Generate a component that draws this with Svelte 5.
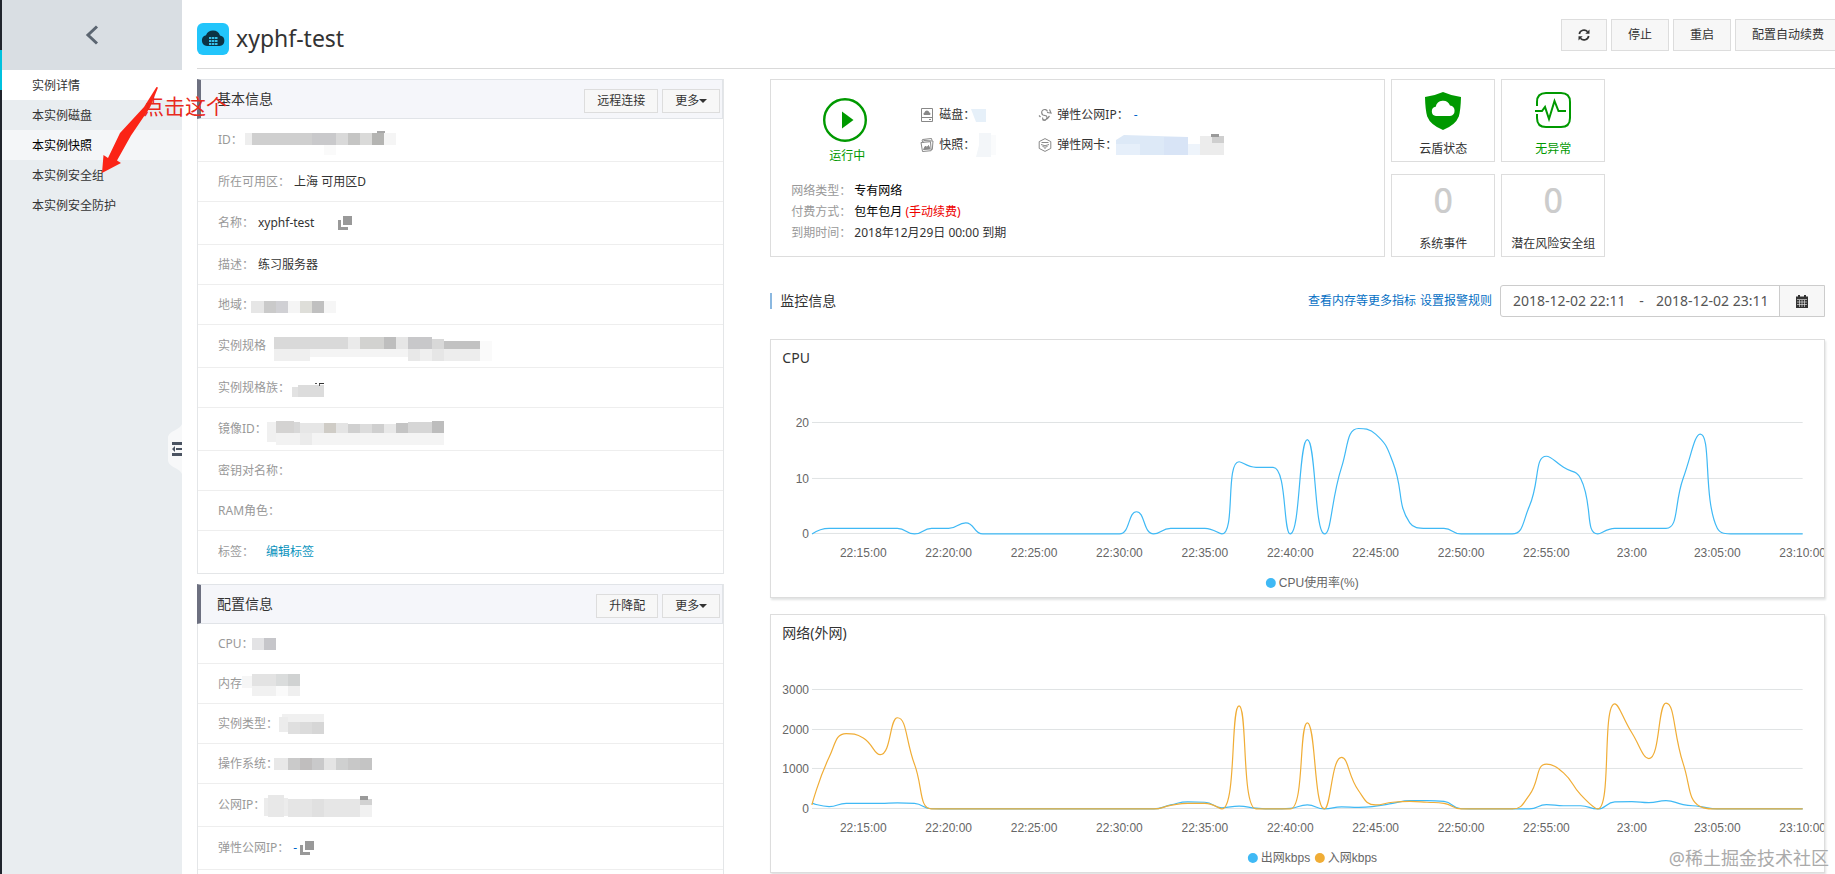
<script lang="ts">
	type Block = [number, number, number, number, string];
	type Row = { label: string; value?: string; copy?: boolean; link?: string; tall?: boolean; mask?: Block[] };
	type Series = { name: string; color: string; values: number[] };

	const menu = [
		{ text: '实例详情', state: 'active' },
		{ text: '本实例磁盘', state: '' },
		{ text: '本实例快照', state: 'hover' },
		{ text: '本实例安全组', state: '' },
		{ text: '本实例安全防护', state: '' }
	];

	// mask blocks are x, y, width, height, colour inside the row
	const basic: Row[] = [
		{
			label: 'ID：',
			tall: true,
			mask: [
				[47, 14, 8, 12, '#eeeeee'], [54, 14, 60, 12, '#cfcfcf'], [114, 14, 24, 12, '#c9c9cb'],
				[138, 14, 12, 12, '#d9d9d9'], [150, 14, 12, 12, '#c5c5c4'], [162, 14, 12, 12, '#dadad9'],
				[174, 14, 12, 12, '#b4b4b2'], [186, 14, 12, 12, '#f5f5f5'], [179, 12, 8, 2, '#a8a8a8'],
				[126, 26, 12, 10, '#fafafa']
			]
		},
		{ label: '所在可用区：', value: '上海 可用区D' },
		{ label: '名称：', value: 'xyphf-test', copy: true, tall: true },
		{ label: '描述：', value: '练习服务器' },
		{
			label: '地域：',
			mask: [
				[53, 16, 13, 12, '#e6e6e6'], [66, 16, 12, 12, '#cacaca'], [78, 16, 12, 12, '#d0d0d4'],
				[90, 16, 12, 12, '#f5f5f5'], [102, 16, 12, 12, '#deded9'], [114, 16, 12, 12, '#c0c0c0'],
				[126, 16, 12, 12, '#f6f6f6']
			]
		},
		{
			label: '实例规格',
			tall: true,
			mask: [
				[76, 12, 74, 12, '#d9d9d9'], [150, 12, 12, 12, '#eaeaea'], [162, 12, 24, 12, '#d2d2d0'],
				[186, 12, 12, 12, '#bebebe'], [198, 12, 12, 12, '#e6e6e6'], [210, 12, 24, 12, '#c8c8ca'],
				[234, 14, 12, 10, '#d8d8d8'], [246, 16, 36, 8, '#c2c2c2'], [282, 16, 12, 20, '#fafafa'],
				[76, 24, 36, 12, '#efefef'], [112, 24, 98, 8, '#f4f4f4'], [210, 24, 12, 12, '#e8e8e8'],
				[222, 24, 12, 12, '#efefef'], [234, 24, 12, 12, '#e6e6e6'], [246, 24, 36, 12, '#ededed']
			]
		},
		{
			label: '实例规格族：',
			mask: [
				[94, 19, 6, 10, '#e2e2e2'], [100, 17, 26, 12, '#dcdcdc'], [117, 15, 2, 1, '#555555'],
				[121, 15, 5, 1, '#333333'], [121, 16, 1, 2, '#555555']
			]
		},
		{
			label: '镜像ID：',
			tall: true,
			mask: [
				[69, 14, 9, 20, '#f0f0f0'], [78, 13, 18, 12, '#d4d3d2'], [96, 14, 6, 11, '#d8d8d8'],
				[102, 15, 24, 10, '#e6e6e6'], [126, 15, 12, 10, '#cfccc6'], [138, 15, 12, 10, '#e4e4e4'],
				[150, 16, 12, 9, '#d0d0d0'], [162, 16, 12, 9, '#dcdcdc'], [174, 16, 12, 9, '#cfcfcf'],
				[186, 16, 12, 9, '#e8e8e8'], [198, 15, 12, 10, '#c4c4c4'], [210, 14, 24, 11, '#d6d6d6'],
				[234, 13, 12, 12, '#bdbdbd'], [78, 25, 24, 12, '#f2f2f2'], [102, 25, 12, 12, '#ebebeb'],
				[114, 25, 132, 12, '#f4f4f4']
			]
		},
		{ label: '密钥对名称：' },
		{ label: 'RAM角色：' },
		{ label: '标签：', link: '编辑标签', tall: true }
	];

	const config: Row[] = [
		{ label: 'CPU：', mask: [[54, 14, 12, 12, '#e3e3e5'], [66, 14, 12, 12, '#c6c6ca']] },
		{
			label: '内存',
			mask: [
				[44, 12, 10, 12, '#f6f6f6'], [54, 10, 24, 12, '#e3e3e3'], [78, 10, 12, 12, '#dadcdc'],
				[90, 10, 12, 12, '#d0d2d2'], [54, 22, 24, 10, '#f1f1f1'], [78, 22, 12, 10, '#fafafa'],
				[90, 22, 12, 10, '#efefef']
			]
		},
		{
			label: '实例类型：',
			mask: [
				[84, 10, 42, 8, '#f0f0f0'], [81, 13, 9, 15, '#ececec'], [90, 18, 12, 12, '#dfdfdf'],
				[102, 18, 12, 12, '#dbdbdb'], [114, 18, 12, 12, '#d6d6d6']
			]
		},
		{
			label: '操作系统：',
			mask: [
				[76, 14, 14, 12, '#e8e8e8'], [90, 14, 12, 12, '#cacaca'], [102, 14, 12, 12, '#c0bebe'],
				[114, 14, 12, 12, '#c9c9ca'], [126, 14, 12, 12, '#e4e4e4'], [138, 14, 12, 12, '#cfd0d0'],
				[150, 14, 12, 12, '#c8c8c8'], [162, 14, 12, 12, '#c4c4c4']
			]
		},
		{
			label: '公网IP：',
			tall: true,
			mask: [
				[66, 14, 24, 18, '#ececec'], [70, 11, 16, 22, '#e8e8e8'], [90, 15, 24, 18, '#e5e5e5'],
				[114, 15, 12, 18, '#e0e0e0'], [126, 15, 36, 18, '#e6e6e6'], [162, 15, 12, 6, '#d2d2d2'],
				[162, 12, 8, 4, '#9a9a9a'], [162, 21, 12, 12, '#f1f1f1']
			]
		},
		{ label: '弹性公网IP：', value: '-', copy: true, tall: true },
		{ label: '' }
	];

	const ticks = ['22:15:00', '22:20:00', '22:25:00', '22:30:00', '22:35:00', '22:40:00', '22:45:00', '22:50:00', '22:55:00', '23:00', '23:05:00', '23:10:00'];

	const cpu: Series[] = [
		{
			name: 'CPU使用率(%)',
			color: '#3fb9f5',
			values: [0, 1, 1, 1, 1, 1, 0, 1, 1, 2, 0, 0, 0, 0, 0, 0, 0, 0, 0, 4, 0, 1, 1, 1, 0, 13, 12, 12, 0, 17, 0, 12, 19, 18, 13, 2, 1, 1, 0, 0, 0, 0, 5, 14, 12, 10, 0, 1, 1, 1, 1, 10, 18, 1, 0, 0, 0, 0, 0]
		}
	];

	const network: Series[] = [
		{
			name: '出网kbps',
			color: '#3fb9f5',
			values: [150, 60, 140, 140, 140, 155, 140, 5, 0, 0, 0, 0, 0, 0, 0, 0, 0, 0, 0, 0, 0, 100, 180, 170, 30, 70, 20, 0, 15, 100, 0, 50, 40, 70, 140, 210, 210, 190, 5, 0, 0, 0, 0, 110, 80, 80, 0, 180, 185, 160, 210, 110, 60, 0, 0, 0, 0, 0, 0]
		},
		{
			name: '入网kbps',
			color: '#f0ad36',
			values: [100, 1300, 1900, 1790, 1370, 2300, 1130, 0, 0, 0, 0, 0, 0, 0, 0, 0, 0, 0, 0, 0, 0, 90, 140, 140, 0, 2600, 0, 0, 0, 2170, 0, 1300, 460, 100, 170, 190, 170, 140, 0, 0, 0, 0, 350, 1130, 910, 360, 0, 2650, 1920, 1270, 2670, 1150, 60, 0, 0, 0, 0, 0, 0]
		}
	];

	const left = 41;
	const right = 1032;
	const bottom = 167;

	function clamp(v: number, a: number, b: number) {
		return Math.max(Math.min(v, Math.max(a, b)), Math.min(a, b));
	}

	// smooth curve whose control points never pass the neighbouring values
	function curve(values: number[], max: number, top: number) {
		const pts = values.map((v, i) => [
			left + ((right - left) * i) / (values.length - 1),
			bottom - ((bottom - top) * v) / max
		]);
		let d = `M${pts[0][0]} ${pts[0][1]}`;
		let out = pts[0];
		for (let i = 1; i < pts.length; i++) {
			const prev = pts[i - 1];
			const p = pts[i];
			const next = pts[i + 1];
			let into = p;
			let nextOut = p;
			if (next) {
				const a = Math.hypot(p[0] - prev[0], p[1] - prev[1]);
				const b = Math.hypot(next[0] - p[0], next[1] - p[1]);
				const ratio = b / (a + b);
				nextOut = p.map((c, k) => clamp(c + (next[k] - prev[k]) * 0.5 * ratio, c, next[k]));
				into = p.map((c, k) => clamp(c - ((nextOut[k] - c) * a) / b, prev[k], c));
				nextOut = p.map((c, k) => c + ((c - into[k]) * b) / a);
			}
			d += `C${[...out, ...into, ...p].map((n) => n.toFixed(1)).join(' ')}`;
			out = nextOut;
		}
		return d;
	}

	let from = $state('2018-12-02 22:11');
	let to = $state('2018-12-02 23:11');
</script>

<svelte:head>
	<title>xyphf-test</title>
</svelte:head>

{#snippet copyIcon()}
	<svg width="14" height="14" viewBox="0 0 14 14" aria-hidden="true">
		<path d="M5 0h9v9H5zM0 4h3v7h7v3H0z" fill="#999" />
	</svg>
{/snippet}

{#snippet panel(title: string, action: string, rows: Row[])}
	<section class="panel">
		<header class="panel-head">
			<h2>{title}</h2>
			<button type="button" class="btn-small">{action}</button>
			<button type="button" class="btn-small more">更多<span class="caret"></span></button>
		</header>
		{#each rows as row}
			<div class="row" class:tall={row.tall}>
				<span class="label">{row.label}</span>
				{#if row.value}
					<span class="value" class:dash={row.value === '-'}>{row.value}</span>
				{/if}
				{#if row.link}
					<a href="#tags" class="tag-link">{row.link}</a>
				{/if}
				{#if row.copy}
					<button type="button" class="copy" class:near={row.value === '-'} aria-label="copy">{@render copyIcon()}</button>
				{/if}
				{#if row.mask}
					<svg class="mask" width="300" height="40" aria-hidden="true">
						{#each row.mask as [x, y, w, h, fill]}
							<rect {x} {y} width={w} height={h} {fill} />
						{/each}
					</svg>
				{/if}
			</div>
		{/each}
	</section>
{/snippet}

{#snippet chart(title: string, series: Series[], max: number, steps: number, top: number, legend: number[])}
	<section class="chart">
		<h3>{title}</h3>
		<svg viewBox="0 0 1053 230" role="img" aria-label={title}>
			{#each Array(steps + 1) as _, i}
				{@const y = Math.round(bottom - ((bottom - top) * i) / steps)}
				<line x1={left} x2={right} y1={y - 0.5} y2={y - 0.5} stroke="#e0e3e4" />
				<text x={left - 3} y={y + 4} text-anchor="end">{(max / steps) * i}</text>
			{/each}
			{#each ticks as tick, i}
				<text x={left + ((right - left) * (3 + 5 * i)) / 58} y="190" text-anchor="middle">{tick}</text>
			{/each}
			{#each series as s, i}
				<path d={curve(s.values, max, top)} fill="none" stroke={s.color} stroke-width="1.2" />
				<circle cx={legend[i]} cy="216" r="5" fill={s.color} />
				<text x={legend[i] + 8} y="220">{s.name}</text>
			{/each}
		</svg>
	</section>
{/snippet}

<div class="page">
	<div class="strip"><span></span></div>
	<aside class="sidebar">
		<button type="button" class="back" aria-label="back">
			<svg width="14" height="20" viewBox="0 0 14 20"><path d="M12 1.500L3 10l9 8.500" fill="none" stroke="#5b6571" stroke-width="3" /></svg>
		</button>
		<nav>
			{#each menu as item}
				<a href="#menu" class={item.state}>{item.text}</a>
			{/each}
		</nav>
		<button type="button" class="handle" aria-label="collapse">
			<svg width="14" height="50" viewBox="0 0 14 50">
				<path d="M14 0C12 6 0 7 0 14v22c0 7 12 8 14 14z" fill="#f7f8f9" />
				<path d="M4 18h10v3H4zM8 24h6v2H8zM4 29h10v3H4zM7 22v6l-3-3z" fill="#4a5361" />
			</svg>
		</button>
	</aside>

	<main>
		<header class="top">
			<svg width="32" height="32" viewBox="0 0 32 32" aria-hidden="true">
				<rect width="32" height="32" rx="6" fill="#22c5fb" />
				<path d="M10 23a5.500 5.500 0 0 1-1-10.800A7.500 7.500 0 0 1 23 12.500 5.300 5.300 0 0 1 22.500 23z" fill="#0c3344" />
				<path d="M12 14h8.500v2H12zM12 17h8.500v2H12zM12 20h8.500v2H12z" fill="#35bfe8" />
				<path d="M14.500 14v8M17.500 14v8" stroke="#0c3344" stroke-width=".6" />
			</svg>
			<h1>xyphf-test</h1>
			<div class="tools">
				<button type="button" class="btn refresh" aria-label="refresh">
					<svg width="12" height="12" viewBox="0 0 12 12">
						<path d="M1.300 5A4.800 4.800 0 0 1 9.600 2.700M10.700 7a4.800 4.800 0 0 1-8.300 2.300" fill="none" stroke="#333" stroke-width="1.700" />
						<path d="M11.500 .5v4.200H7.300zM.5 11.500V7.300h4.200z" fill="#333" />
					</svg>
				</button>
				<button type="button" class="btn">停止</button>
				<button type="button" class="btn">重启</button>
				<button type="button" class="btn">配置自动续费</button>
			</div>
		</header>

		<div class="columns">
			<div class="left">
				{@render panel('基本信息', '远程连接', basic)}
				{@render panel('配置信息', '升降配', config)}
			</div>

			<div class="right">
				<div class="overview">
					<section class="status">
						<div class="status-top">
							<div class="running">
								<svg width="44" height="44" viewBox="0 0 44 44" aria-hidden="true">
									<circle cx="22" cy="22" r="20.800" fill="none" stroke="#090" stroke-width="2.400" />
									<path d="M19 13.500v17L30.500 22z" fill="#090" />
								</svg>
								<span>运行中</span>
							</div>
							<div class="resources">
								<div class="res">
									<svg width="14" height="14" viewBox="0 0 14 14" fill="none" stroke="#888">
										<path d="M1.500 .5h11v13h-11zM1.500 9.500h11M9 11.500h2" />
										<path d="M4 7a1.500 1.500 0 0 1 .5-2.600 2.500 2.500 0 0 1 4.800 0A1.500 1.500 0 0 1 10 7z" fill="#888" stroke="none" />
									</svg>
									<span>磁盘：</span>
									<svg class="mask-disk" width="16" height="13"><path d="M0 0h15v13H5z" fill="#e6f0f9" /></svg>
								</div>
								<div class="res">
									<svg width="14" height="14" viewBox="0 0 14 14" fill="none" stroke="#888">
										<path d="M4 4.500L2 3l.5-1.500 9-1 .5 2" />
										<path d="M3.500 2.500l9.500.5-.7 8.500-1.500-.2M1 4.500l9.500-.8.7 9-8.700.8z" />
										<path d="M3.500 11.500l2-3.500 1.500 1.500 1.500-2 1.500 3.500z" fill="#888" />
									</svg>
									<span>快照：</span>
									<svg class="mask-snap" width="20" height="24"><path d="M3 0h12v24H0l3-12z" fill="#f3f6f9" /><path d="M15 2h5v20h-5z" fill="#fafbfc" /></svg>
								</div>
								<div class="res">
									<svg width="14" height="14" viewBox="0 0 14 14" fill="none" stroke="#888" stroke-width="1.200">
										<path d="M9.500 3.500A3 3 0 1 0 5 7l3.500 1A2.500 2.500 0 0 1 5 11.500" />
										<path d="M4.500 9.500L5 12l2.500.3M9 4.500L13 5l-1.500-3.500M9 11l2.500-3M1 7.500l1.500 1.500" />
									</svg>
									<span>弹性公网IP：</span>
									<b>-</b>
								</div>
								<div class="res">
									<svg width="14" height="14" viewBox="0 0 14 14" fill="none" stroke="#888">
										<path d="M7 .6l5.800 3v6.800L7 13.400 1.200 10.400V3.600z" />
										<path d="M3.500 4.500h7M3 6.500q4 2.500 8 0M4.500 8.500q2.500 1.500 5 0M6.500 10.500h1" />
									</svg>
									<span>弹性网卡：</span>
									<svg class="mask-eni" width="108" height="22">
										<path d="M0 21V6l8-5 64 2v18z" fill="#dde9f7" />
										<rect x="0" y="10" width="24" height="11" fill="#e6effa" />
										<rect x="48" y="3" width="24" height="18" fill="#d8e4f6" />
										<rect x="72" y="10" width="12" height="11" fill="#eef4fb" />
										<rect x="84" y="2" width="24" height="19" fill="#ececec" />
										<rect x="96" y="2" width="12" height="7" fill="#cfcfcf" />
										<rect x="95" y="0" width="8" height="3" fill="#9a9a9a" />
									</svg>
								</div>
							</div>
						</div>
						<dl>
							<div><dt>网络类型：</dt><dd>专有网络</dd></div>
							<div><dt>付费方式：</dt><dd>包年包月 <em>(手动续费)</em></dd></div>
							<div><dt>到期时间：</dt><dd class="date">2018年12月29日 00:00 到期</dd></div>
						</dl>
					</section>
					<div class="tiles">
						<div class="tile">
							<svg width="36" height="38" viewBox="0 0 36 38" aria-hidden="true">
								<path d="M18 0q9 4 18 5-.3 13-2.200 19.500Q30.500 33 18 38 5.500 33 2.200 24.500.3 18 0 5q9-1 18-5z" fill="#090" />
								<path d="M11 24a4.700 4.700 0 0 1-.3-9.300 7.500 7.500 0 0 1 14.300-1.200A5.300 5.300 0 0 1 25 24z" fill="#fff" />
							</svg>
							<span>云盾状态</span>
						</div>
						<div class="tile ok">
							<svg width="36" height="36" viewBox="0 0 36 36" fill="none" stroke="#090" stroke-width="2" aria-hidden="true">
								<path d="M2 14v-4q0-9 9-9h15q9 0 9 9v16q0 9-9 9H11q-9 0-9-9v-4" />
								<path d="M0 19h7l3-4 4 12 5.500-18 4 10H31" />
							</svg>
							<span>无异常</span>
						</div>
						<div class="tile"><strong>0</strong><span>系统事件</span></div>
						<div class="tile"><strong>0</strong><span>潜在风险安全组</span></div>
					</div>
				</div>

				<div class="monitor-head">
					<h2>监控信息</h2>
					<div class="links">
						<a href="#metrics">查看内存等更多指标</a>
						<a href="#alarm">设置报警规则</a>
					</div>
					<div class="range">
						<input type="text" aria-label="from" bind:value={from} />
						<span>-</span>
						<input type="text" aria-label="to" bind:value={to} />
						<button type="button" aria-label="calendar">
							<svg width="12" height="13" viewBox="0 0 12 13">
								<path d="M0 1.500h2V0h2v1.500h4V0h2v1.500h2V13H0z" fill="#333" />
								<path d="M1 4.500h10M1 7h10M1 9.500h10M3.500 5v7M6 5v7M8.500 5v7" stroke="#f7f7f7" stroke-width=".6" />
							</svg>
						</button>
					</div>
				</div>

				{@render chart('CPU', cpu, 20, 2, 56, [500])}
				{@render chart('网络(外网)', network, 3000, 3, 48, [482, 549])}
			</div>
		</div>
	</main>

	<div class="note">
		<svg width="56" height="88" viewBox="0 0 56 88" aria-hidden="true">
			<path d="M54.500 0l1.500.5-8 20-19 28-14 25 4 2.500L0 86l1.500-18L6 71l12-25 24-26z" fill="#fb2416" />
		</svg>
		<span>点击这个</span>
	</div>
	<div class="watermark">@稀土掘金技术社区</div>
</div>

<style>
	:global(body) {
		background: #fff;
		color: #333;
		font: 12px/18px 'Noto Sans', 'Noto Sans CJK SC', sans-serif;
	}

	.page {
		position: relative;
		display: flex;
		height: 100vh;
		overflow: hidden;
	}

	h1, h2, h3, dl, dd {
		margin: 0;
		font-weight: 400;
	}

	a {
		text-decoration: none;
	}

	button, input {
		font: inherit;
		color: inherit;
	}

	svg {
		display: block;
		flex: none;
	}

	.strip {
		flex: 0 0 2px;
		padding-top: 50px;
		background: #20242c;
	}

	.strip span {
		display: block;
		height: 40px;
		background: #00c1de;
	}

	.sidebar {
		position: relative;
		flex: 0 0 180px;
		background: #e9edf0;
	}

	.back {
		display: flex;
		align-items: center;
		justify-content: center;
		width: 100%;
		height: 70px;
		padding: 0;
		border: none;
		background: #d9dee3;
	}

	nav a {
		display: block;
		padding: 2px 0 0 30px;
		line-height: 28px;
		color: #333;
	}

	nav .active {
		background: #fff;
	}

	nav .hover {
		background: #f4f6f8;
		color: #000;
	}

	.handle {
		position: absolute;
		top: 424px;
		right: 0;
		padding: 0;
		border: none;
		background: none;
	}

	main {
		flex: 1;
		min-width: 0;
		padding-left: 15px;
	}

	.top {
		display: flex;
		align-items: center;
		height: 60px;
		padding-top: 8px;
		border-bottom: 1px solid #d9d9d9;
		overflow: hidden;
	}

	.top > svg {
		margin-top: 2px;
	}

	h1 {
		margin-left: 7px;
		font-size: 23px;
		line-height: 32px;
	}

	.tools {
		display: flex;
		gap: 4px;
		margin: 0 -6px 6px auto;
	}

	.btn {
		height: 32px;
		padding: 0 16px;
		border: 1px solid #ddd;
		background: #f7f7f7;
	}

	.columns {
		display: grid;
		grid-template-columns: minmax(0, 1fr) minmax(0, 2fr);
		gap: 46px;
		padding: 10px 10px 0 0;
	}

	.panel {
		margin-bottom: 10px;
		border: 1px solid #e4e6e8;
		border-top: none;
	}

	.panel-head {
		display: flex;
		gap: 4px;
		height: 38px;
		margin-left: -1px;
		padding-right: 2px;
		border: 1px solid #e1e4e8;
		border-left: 4px solid #6d7080;
		background: #f5f6fa;
	}

	.panel-head h2 {
		flex: 1;
		padding-left: 16px;
		font-size: 14px;
		line-height: 38px;
	}

	.btn-small {
		height: 24px;
		margin-top: 9px;
		padding: 0 12px;
		border: 1px solid #ddd;
		background: #f7f7f7;
		line-height: 22px;
	}

	.more {
		display: flex;
		align-items: center;
	}

	.caret {
		border: 4px solid transparent;
		border-top-color: #333;
		border-bottom: none;
	}

	.row {
		position: relative;
		display: flex;
		align-items: center;
		gap: 4px;
		height: 39px;
		padding-left: 20px;
		border-bottom: 1px solid #eee;
	}

	.row:last-child {
		border-bottom: none;
	}

	.tall {
		height: 42px;
	}

	.label, dt {
		color: #999;
	}

	.dash, .res b {
		color: #06c;
		font-weight: 400;
	}

	.tag-link {
		margin-left: 8px;
		color: #0a93bd;
	}

	.copy {
		margin-left: 20px;
		padding: 0;
		border: none;
		background: none;
	}

	.copy.near {
		margin-left: -1px;
	}

	.mask {
		position: absolute;
		top: 0;
		left: 0;
	}

	.overview {
		display: flex;
		gap: 6px;
	}

	.status {
		flex: 0 1 613px;
		border: 1px solid #ddd;
	}

	.status-top {
		display: flex;
		height: 68px;
		padding: 18px 0 14px 50px;
	}

	.running {
		display: flex;
		flex-direction: column;
		align-items: center;
		gap: 5px;
		width: 48px;
		color: #090;
	}

	.running span {
		padding-left: 4px;
	}

	.resources {
		display: grid;
		grid-template-columns: 118px 200px;
		grid-template-rows: 30px 30px;
		grid-auto-flow: column;
		margin-left: 51px;
		padding-top: 2px;
	}

	.res {
		position: relative;
		display: flex;
		align-items: center;
		gap: 5px;
	}

	.mask-disk, .mask-snap, .mask-eni {
		position: absolute;
		left: 51px;
	}

	.mask-snap {
		left: 56px;
	}

	.mask-eni {
		left: 78px;
	}

	dl {
		padding: 0 20px;
		line-height: 21px;
	}

	dl div {
		display: flex;
		gap: 3px;
	}

	dd {
		color: #000;
	}

	.date {
		color: #333;
	}

	em {
		color: #e00;
		font-style: normal;
	}

	.tiles {
		display: grid;
		grid-template-columns: 104px 104px;
		grid-auto-rows: 83px;
		gap: 12px 6px;
	}

	.tile {
		display: flex;
		flex-direction: column;
		align-items: center;
		justify-content: space-between;
		padding: 12px 0 3px;
		border: 1px solid #ddd;
		box-sizing: border-box;
	}

	.ok {
		color: #090;
	}

	.tile strong {
		color: #ccc;
		font: 500 34px/26px 'Noto Sans', sans-serif;
	}

	.monitor-head {
		display: flex;
		align-items: center;
		margin: 28px 0 22px;
	}

	.monitor-head h2 {
		padding-left: 8px;
		border-left: 2px solid #8bb8e0;
		font-size: 14px;
		line-height: 16px;
	}

	.links {
		display: flex;
		gap: 4px;
		margin: 0 8px 0 auto;
	}

	.links a {
		color: #0670c4;
	}

	.range {
		display: flex;
		align-items: center;
		height: 30px;
		padding-left: 12px;
		border: 1px solid #ccc;
		border-radius: 3px 0 0 3px;
		color: #555;
		font-size: 14px;
	}

	.range input {
		width: 114px;
		padding: 0;
		border: none;
		background: none;
	}

	.range span {
		width: 29px;
		text-align: center;
	}

	.range button {
		display: flex;
		align-items: center;
		justify-content: center;
		width: 45px;
		height: 30px;
		margin-left: 9px;
		border: none;
		border-left: 1px solid #ccc;
		background: #f7f7f7;
	}

	.chart {
		margin-bottom: 16px;
		border: 1px solid #ddd;
		box-shadow: 1px 2px 2px #e2e4e4;
	}

	h3 {
		padding: 9px 11px 0;
		font-size: 14px;
		line-height: 18px;
	}

	.chart svg {
		width: 100%;
	}

	.chart text {
		fill: #666;
		font: 12px 'Liberation Sans', 'Noto Sans CJK SC', sans-serif;
	}

	.note {
		position: absolute;
		top: 87px;
		left: 102px;
		color: #e8291c;
		font-size: 21px;
		pointer-events: none;
	}

	.note span {
		position: absolute;
		top: 10px;
		left: 41px;
		white-space: nowrap;
	}

	.watermark {
		position: absolute;
		right: 6px;
		bottom: 4px;
		color: #aaa;
		font-size: 18px;
		line-height: 24px;
	}
</style>
